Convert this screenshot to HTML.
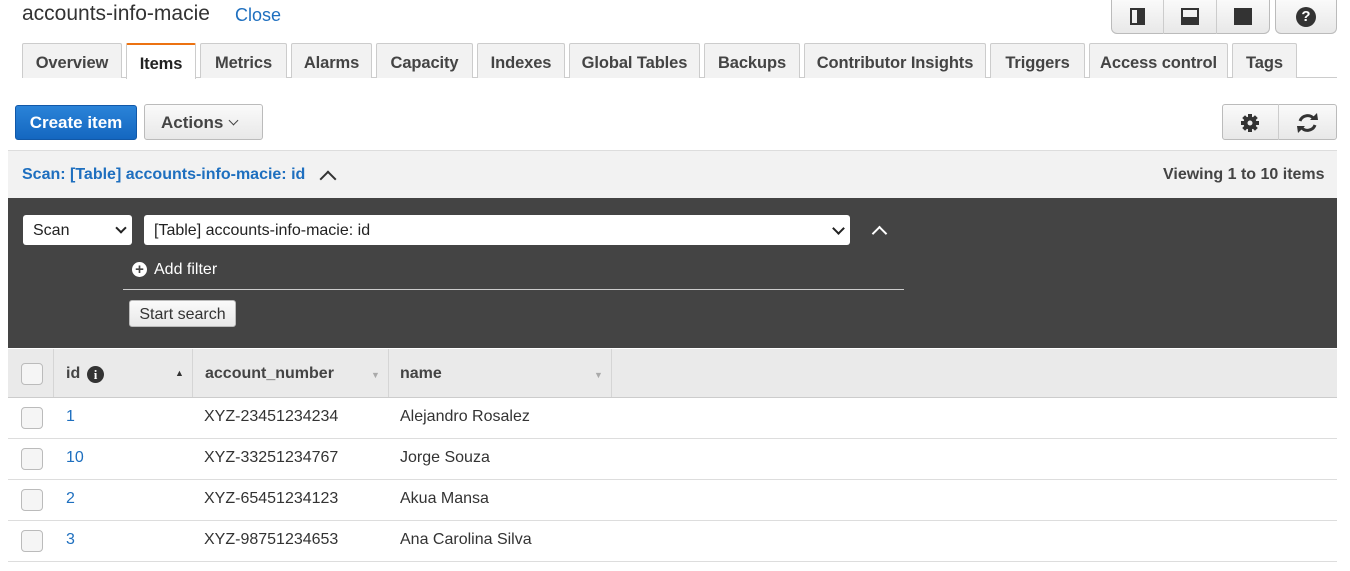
<html><head><style>
body{margin:0;width:1350px;height:571px;background:#fff;font-family:"Liberation Sans",sans-serif;position:relative;overflow:hidden;color:#333}
.a{position:absolute}
.tab{position:absolute;top:43px;height:35px;background:#f2f2f2;border:1px solid #ccc;border-bottom:none;box-sizing:border-box;font-size:16.5px;font-weight:bold;color:#444;text-align:center;line-height:38px;border-radius:2px 2px 0 0;letter-spacing:-0.1px}
.btn{position:absolute;border:1px solid #bbb;border-radius:3px;background:linear-gradient(#fafafa,#e8e8e8);box-sizing:border-box}
.row{position:absolute;left:8px;width:1329px;height:41px;border-bottom:1px solid #ddd;font-size:16px}
.cb{position:absolute;left:13px;top:10px;width:20px;height:20px;border:1px solid #bbb;border-radius:4px;background:#f5f5f5}
.row span{position:absolute;top:11px}
</style></head><body>
<div class="a" style="left:22px;top:2px;font-size:21px;color:#333">accounts-info-macie</div>
<div class="a" style="left:235px;top:5px;font-size:18px;color:#1e6fbf">Close</div>
<div class="btn" style="left:1111px;top:0;width:159px;height:34px;border-top:none;border-radius:0 0 6px 6px"></div>
<div class="a" style="left:1163px;top:0;width:1px;height:34px;background:#ccc"></div>
<div class="a" style="left:1216px;top:0;width:1px;height:34px;background:#ccc"></div>
<div class="a" style="left:1130px;top:8px;width:15px;height:17px;border:2px solid #333;box-sizing:border-box"><div style="width:6px;height:13px;background:#333;margin-left:5px"></div></div>
<div class="a" style="left:1181px;top:8px;width:18px;height:17px;border:2px solid #333;box-sizing:border-box"><div style="width:14px;height:6px;background:#333;margin-top:7px"></div></div>
<div class="a" style="left:1234px;top:8px;width:18px;height:17px;background:#333"></div>
<div class="btn" style="left:1275px;top:0;width:62px;height:34px;border-top:none;border-radius:0 0 6px 6px"></div>
<div class="a" style="left:1296px;top:7px;width:20px;height:20px;border-radius:50%;background:#333;color:#fff;font-weight:bold;font-size:15px;text-align:center;line-height:20px">?</div>

<div class="a" style="left:22px;top:77px;width:1315px;height:1px;background:#ccc"></div>
<div class="tab" style="left:22px;width:100px">Overview</div>
<div class="tab" style="left:126px;width:70px;background:#fff;color:#222;border-top:2px solid #ec7211;height:36px">Items</div>
<div class="tab" style="left:200px;width:87px">Metrics</div>
<div class="tab" style="left:291px;width:81px">Alarms</div>
<div class="tab" style="left:376px;width:97px">Capacity</div>
<div class="tab" style="left:477px;width:88px">Indexes</div>
<div class="tab" style="left:569px;width:131px">Global Tables</div>
<div class="tab" style="left:704px;width:96px">Backups</div>
<div class="tab" style="left:804px;width:182px">Contributor Insights</div>
<div class="tab" style="left:990px;width:95px">Triggers</div>
<div class="tab" style="left:1089px;width:139px">Access control</div>
<div class="tab" style="left:1232px;width:65px">Tags</div>

<div class="a" style="left:15px;top:105px;width:122px;height:35px;border-radius:3px;background:linear-gradient(#2a83d8,#1467c0);border:1px solid #1158a8;box-sizing:border-box;color:#fff;font-weight:bold;font-size:17px;text-align:center;line-height:33px">Create item</div>
<div class="btn" style="left:144px;top:104px;width:119px;height:36px;font-size:17px;font-weight:bold;color:#444;line-height:35px;padding-left:16px">Actions</div>
<div class="a" style="left:230px;top:117px;width:6px;height:6px;border-right:1.5px solid #444;border-bottom:1.5px solid #444;transform:rotate(45deg)"></div>
<div class="btn" style="left:1222px;top:104px;width:115px;height:36px"></div>
<div class="a" style="left:1278px;top:104px;width:1px;height:36px;background:#ccc"></div>
<svg class="a" style="left:1240px;top:113px" width="20" height="20" viewBox="0 0 20 20"><g fill="#333"><circle cx="10" cy="10" r="6.5"/><rect x="8" y="1" width="4" height="18"/><rect x="1" y="8" width="18" height="4"/><rect x="8" y="1" width="4" height="18" transform="rotate(45 10 10)"/><rect x="8" y="1" width="4" height="18" transform="rotate(-45 10 10)"/></g><circle cx="10" cy="10" r="2.5" fill="#eee"/></svg>
<svg class="a" style="left:1295px;top:111px" width="25" height="24" viewBox="0 0 25 24"><g fill="none" stroke="#333" stroke-width="3"><path d="M5 10 A8 8 0 0 1 19 8"/><path d="M20 14 A8 8 0 0 1 6 16"/></g><path d="M15 9 L23 9 L22 2Z" fill="#333"/><path d="M10 15 L2 15 L3 22Z" fill="#333"/></svg>

<div class="a" style="left:8px;top:150px;width:1329px;height:48px;background:#f2f2f2;border-top:1px solid #ddd"></div>
<div class="a" style="left:22px;top:166px;font-size:16px;font-weight:bold;color:#1e6fbf">Scan: [Table] accounts-info-macie: id</div>
<div class="a" style="left:322px;top:173px;width:10px;height:10px;border-left:2px solid #333;border-top:2px solid #333;transform:rotate(45deg)"></div>
<div class="a" style="left:1163px;top:166px;font-size:16px;font-weight:bold;color:#444">Viewing 1 to 10 items</div>

<div class="a" style="left:8px;top:198px;width:1329px;height:150px;background:#444"></div>
<div class="a" style="left:23px;top:215px;width:109px;height:30px;background:#fff;border-radius:3px;font-size:16px;line-height:32px;padding-left:10px;box-sizing:border-box;color:#222">Scan</div>
<div class="a" style="left:117px;top:224px;width:6px;height:6px;border-right:2px solid #222;border-bottom:2px solid #222;transform:rotate(45deg)"></div>
<div class="a" style="left:144px;top:215px;width:706px;height:30px;background:#fff;border-radius:3px;font-size:16px;line-height:32px;padding-left:10px;box-sizing:border-box;color:#222">[Table] accounts-info-macie: id</div>
<div class="a" style="left:834px;top:224px;width:7px;height:7px;border-right:2px solid #222;border-bottom:2px solid #222;transform:rotate(45deg)"></div>
<div class="a" style="left:874px;top:228px;width:9px;height:9px;border-left:2px solid #fff;border-top:2px solid #fff;transform:rotate(45deg)"></div>
<div class="a" style="left:132px;top:262px;width:15px;height:15px;border-radius:50%;background:#fff;color:#444;font-weight:bold;font-size:15px;line-height:15px;text-align:center">+</div>
<div class="a" style="left:154px;top:261px;font-size:16px;color:#fff">Add filter</div>
<div class="a" style="left:123px;top:289px;width:781px;height:1px;background:#ccc"></div>
<div class="btn" style="left:129px;top:300px;width:107px;height:27px;font-size:16px;color:#333;line-height:27px;text-align:center">Start search</div>

<div class="a" style="left:8px;top:349px;width:1329px;height:48px;background:#eaeaea;border-bottom:1px solid #ccc"></div>
<div class="a" style="left:21px;top:363px;width:20px;height:20px;border:1px solid #bbb;border-radius:4px;background:#f5f5f5"></div>
<div class="a" style="left:53px;top:349px;width:1px;height:48px;background:#d5d5d5"></div>
<div class="a" style="left:192px;top:349px;width:1px;height:48px;background:#d5d5d5"></div>
<div class="a" style="left:388px;top:349px;width:1px;height:48px;background:#d5d5d5"></div>
<div class="a" style="left:611px;top:349px;width:1px;height:48px;background:#d5d5d5"></div>
<div class="a" style="left:66px;top:365px;font-size:16px;font-weight:bold;color:#444">id</div>
<div class="a" style="left:87px;top:366px;width:17px;height:17px;border-radius:50%;background:#333;color:#fff;font-size:13px;font-weight:bold;font-family:'Liberation Serif';text-align:center;line-height:17px">i</div>
<div class="a" style="left:175px;top:368px;font-size:9px;color:#333">&#9650;</div>
<div class="a" style="left:205px;top:365px;font-size:16px;font-weight:bold;color:#444">account_number</div>
<div class="a" style="left:371px;top:370px;font-size:9px;color:#aaa">&#9660;</div>
<div class="a" style="left:400px;top:365px;font-size:16px;font-weight:bold;color:#444">name</div>
<div class="a" style="left:594px;top:370px;font-size:9px;color:#aaa">&#9660;</div>

<div class="row" style="top:397px"><div class="cb"></div><span style="left:58px;color:#1e6fbf">1</span><span style="left:196px">XYZ-23451234234</span><span style="left:392px">Alejandro Rosalez</span></div>
<div class="row" style="top:438px"><div class="cb"></div><span style="left:58px;color:#1e6fbf">10</span><span style="left:196px">XYZ-33251234767</span><span style="left:392px">Jorge Souza</span></div>
<div class="row" style="top:479px"><div class="cb"></div><span style="left:58px;color:#1e6fbf">2</span><span style="left:196px">XYZ-65451234123</span><span style="left:392px">Akua Mansa</span></div>
<div class="row" style="top:520px"><div class="cb"></div><span style="left:58px;color:#1e6fbf">3</span><span style="left:196px">XYZ-98751234653</span><span style="left:392px">Ana Carolina Silva</span></div>
</body></html>
